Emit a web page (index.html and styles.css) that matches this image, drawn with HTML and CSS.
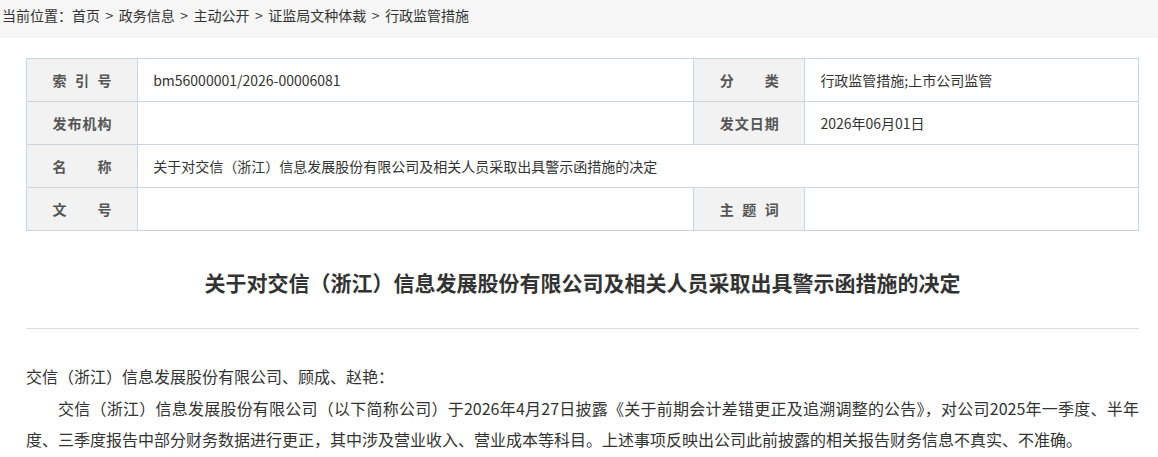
FILE: index.html
```html
<!DOCTYPE html>
<html lang="zh-CN">
<head>
    <meta charset="UTF-8">
    <meta name="viewport" content="width=device-width, initial-scale=1.0">
    <title>关于对交信（浙江）信息发展股份有限公司及相关人员采取出具警示函措施的决定</title>
    <link rel="stylesheet" href="styles.css">
</head>
<body>
    <div class="crumb">
        当前位置：<a href="#">首页</a><span class="sep">&gt;</span><a href="#">政务信息</a><span class="sep">&gt;</span><a href="#">主动公开</a><span class="sep">&gt;</span><a href="#">证监局文种体裁</a><span class="sep">&gt;</span><a href="#">行政监管措施</a>
    </div>

    <div class="main">
        <table class="info">
            <colgroup>
                <col class="c-lbl">
                <col class="c-wide">
                <col class="c-lbl">
                <col>
            </colgroup>
            <tr>
                <th><span class="lbl">索引号</span></th>
                <td>bm56000001/2026-00006081</td>
                <th><span class="lbl">分类</span></th>
                <td>行政监管措施;上市公司监管</td>
            </tr>
            <tr>
                <th><span class="lbl">发布机构</span></th>
                <td></td>
                <th><span class="lbl">发文日期</span></th>
                <td>2026年06月01日</td>
            </tr>
            <tr>
                <th><span class="lbl">名称</span></th>
                <td colspan="3">关于对交信（浙江）信息发展股份有限公司及相关人员采取出具警示函措施的决定</td>
            </tr>
            <tr>
                <th><span class="lbl">文号</span></th>
                <td></td>
                <th><span class="lbl">主题词</span></th>
                <td></td>
            </tr>
        </table>

        <h1 class="title">关于对交信（浙江）信息发展股份有限公司及相关人员采取出具警示函措施的决定</h1>

        <div class="content">
            <p class="to">交信（浙江）信息发展股份有限公司、顾成、赵艳：</p>
            <p>交信（浙江）信息发展股份有限公司（以下简称公司）于2026年4月27日披露《关于前期会计差错更正及追溯调整的公告》，对公司2025年一季度、半年度、三季度报告中部分财务数据进行更正，其中涉及营业收入、营业成本等科目。上述事项反映出公司此前披露的相关报告财务信息不真实、不准确。</p>
        </div>
    </div>
</body>
</html>
```

FILE: styles.css
```css
body {
    margin: 0;
    font-family: "Noto Sans CJK SC", "Microsoft YaHei", sans-serif;
    color: #333;
    background-color: #fff;
}

a {
    color: #333;
    text-decoration: none;
}

/* breadcrumb bar */
.crumb {
    background-color: #f6f6f6;
    height: 38px;
    padding: 4px 0 0 2px;
    box-sizing: border-box;
    font-size: 14px;
    line-height: 22px;
}

.crumb .sep {
    margin: 0 5.5px;
}

.main {
    width: 1113px;
    margin: 20px 0 0 26px;
}

/* document info table */
.info {
    width: 100%;
    border-collapse: collapse;
    table-layout: fixed;
    font-size: 14px;
}

.info .c-lbl {
    width: 10%;
}

.info .c-wide {
    width: 50%;
}

.info th,
.info td {
    border: 1px solid #cbd5df;
    height: 42px;
    padding: 0;
}

.info th {
    background-color: #f2f2f2;
    color: #555;
    font-weight: bold;
    text-align: center;
}

.info td {
    padding-left: 15px;
    color: #333;
}

.lbl {
    display: inline-block;
    width: 59px;
    text-align: justify;
    text-align-last: justify;
}

.title {
    margin: 36px 0 0;
    font-size: 21px;
    line-height: 30px;
    font-weight: bold;
    color: #333;
    text-align: center;
    padding-bottom: 31px;
    border-bottom: 1px solid #ddd;
}

.content {
    padding-top: 32px;
    font-size: 16px;
    line-height: 31.5px;
}

.content p {
    margin: 0;
    text-indent: 2em;
    text-align: justify;
}

.content p.to {
    text-indent: 0;
}
```
